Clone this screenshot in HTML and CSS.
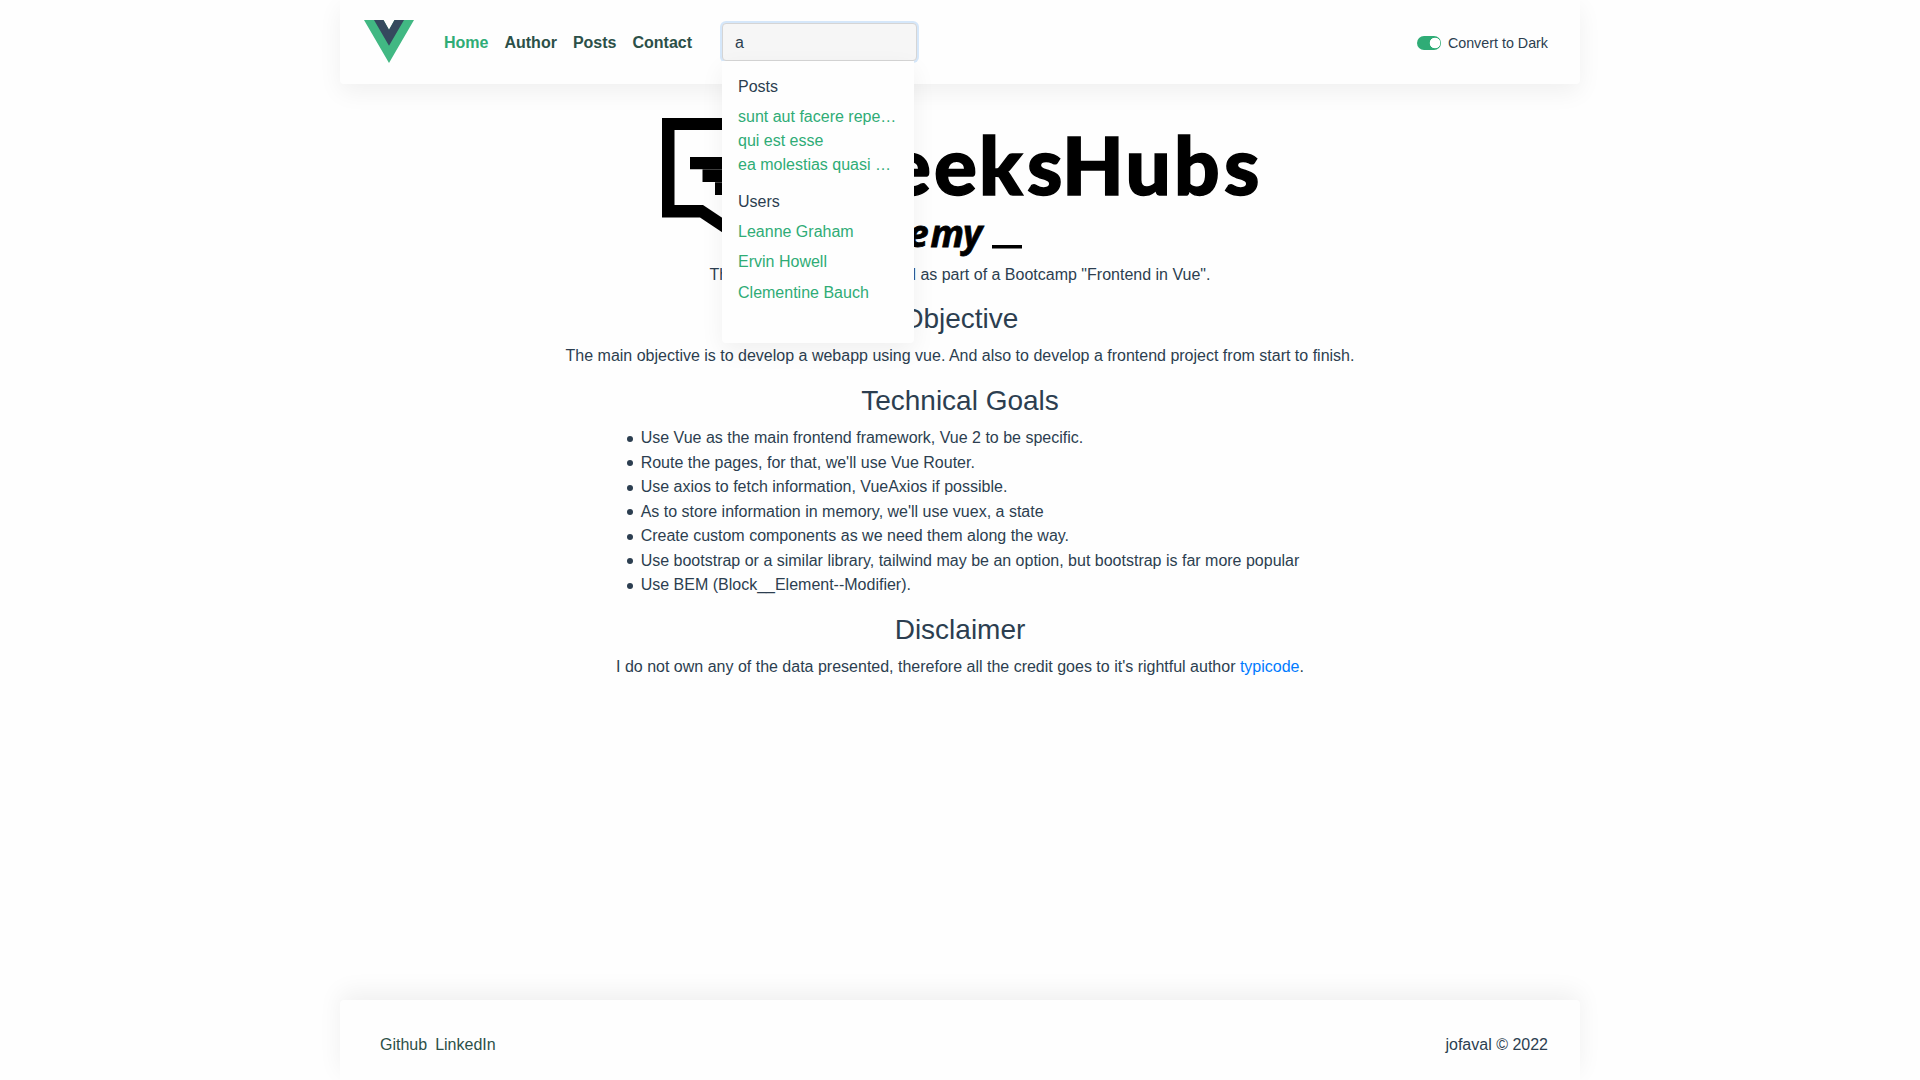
FILE: index.html
```html
<!DOCTYPE html>
<html lang="en">
<head>
<meta charset="utf-8">
<title>Home</title>
<link rel="stylesheet" href="styles.css">
</head>
<body>
<div class="app">
  <header class="header">
    <svg class="header__logo" viewBox="0 0 50 43"><path fill="#41b883" d="M0 0h19.500L25 9.700 30.500 0H50L25 43z"/><path fill="#35495e" d="M10 0h9.500L25 9.700 30.500 0H40L25 25.800z"/></svg>
    <nav class="nav">
      <a class="nav__link nav__link--active">Home</a>
      <a class="nav__link">Author</a>
      <a class="nav__link">Posts</a>
      <a class="nav__link">Contact</a>
    </nav>
    <div class="search">
      <input class="search__input" type="text" value="a">
      <div class="search__results">
        <p class="search__title">Posts</p>
        <ul class="search__posts">
          <li>sunt aut facere repellat provident</li>
          <li>qui est esse</li>
          <li>ea molestias quasi exercitationem</li>
        </ul>
        <p class="search__title">Users</p>
        <ul class="search__users">
          <li>Leanne Graham</li>
          <li>Ervin Howell</li>
          <li>Clementine Bauch</li>
        </ul>
      </div>
    </div>
    <label class="theme"><span class="theme__switch"></span>Convert to Dark</label>
  </header>
  <main class="main">
    <svg class="brand" viewBox="660 116 600 142">
      <path d="M662 118H802V217.500H742V245.500L700 217.500H662ZM674.500 130V205H703L730 223V205H790V130Z" fill-rule="evenodd"/>
      <path d="M690 157H770V169.300H690ZM702.500 169.500H770V182H702.500ZM715 182.200H760V195H715Z"/>
      <text class="brand__name" y="195" x="820 888 934 979 1027 1062 1125.500 1174 1224">GeeksHubs</text>
      <text class="brand__sub" y="246.500" x="806 832 850 874 908 930.500 963">Academy</text>
      <path d="M992 245H1022V248.500H992Z"/>
    </svg>
    <p class="intro">This web app was developed as part of a Bootcamp "Frontend in Vue".</p>
    <h3>Objective</h3>
    <p>The main objective is to develop a webapp using vue. And also to develop a frontend project from start to finish.</p>
    <h3>Technical Goals</h3>
    <ul class="goals">
      <li>Use Vue as the main frontend framework, Vue 2 to be specific.</li>
      <li>Route the pages, for that, we'll use Vue Router.</li>
      <li>Use axios to fetch information, VueAxios if possible.</li>
      <li>As to store information in memory, we'll use vuex, a state</li>
      <li>Create custom components as we need them along the way.</li>
      <li>Use bootstrap or a similar library, tailwind may be an option, but bootstrap is far more popular</li>
      <li>Use BEM (Block__Element--Modifier).</li>
    </ul>
    <h3>Disclaimer</h3>
    <p>I do not own any of the data presented, therefore all the credit goes to it's rightful author <a class="link">typicode</a>.</p>
  </main>
  <footer class="footer">
    <div class="footer__links"><a>Github</a><a>LinkedIn</a></div>
    <span>jofaval © 2022</span>
  </footer>
</div>
</body>
</html>
```
FILE: styles.css
```css
* { box-sizing: border-box; }
body {
  margin: 0;
  background: #fefefe;
  color: #2c3e50;
  font: 16px/24.5px "Liberation Sans", Arial, sans-serif;
  -webkit-font-smoothing: antialiased;
  overflow: hidden;
}
p, h3, ul { margin: 0; padding: 0; }
.app {
  width: 1240px;
  height: 1080px;
  margin: 0 auto;
  display: flex;
  flex-direction: column;
}
.header {
  position: relative;
  z-index: 1;
  height: 84px;
  flex: none;
  padding: 0 32px 0 24px;
  display: flex;
  align-items: center;
  background: #fefefe;
  border-radius: 0 0 4px 4px;
  box-shadow: 0 8px 24px rgba(0, 0, 0, .06);
}
.header__logo { width: 50px; height: 43px; margin-bottom: 1px; }
.nav { display: flex; gap: 16px; margin-left: 30px; padding-top: 2px; }
.nav__link { font-weight: 700; color: #2c5048; }
.nav__link--active { color: #2fac76; }
.search { position: relative; margin-left: 30px; }
.search__input {
  display: block;
  width: 195px;
  height: 38px;
  padding: 7px 12px 5px;
  border: 1px solid #d5d5d5;
  border-radius: 4px;
  background: #f6f6f6;
  color: #2c3e50;
  font: inherit;
  outline: none;
  box-shadow: 0 0 0 2px #d5e7fa;
}
.search__results {
  position: absolute;
  top: 38px;
  left: 0;
  width: 192px;
  height: 282px;
  padding: 14px 16px;
  background: #fefefe;
  border-radius: 0 0 4px 4px;
  box-shadow: 0 8px 24px rgba(0, 0, 0, .06);
}
.search__results ul { list-style: none; color: #2fac76; }
.search__results p { margin: 0; }
.search__results li { overflow: hidden; text-overflow: ellipsis; white-space: nowrap; }
.search__results .search__posts { margin: 5px 0 13px; line-height: 24px; }
.search__results .search__users { margin-top: 3px; line-height: 30.400px; }
.theme { margin-left: auto; padding-top: 2px; display: flex; align-items: center; gap: 7px; font-size: 14.300px; }
.theme__switch {
  width: 24px;
  height: 14px;
  border-radius: 7px;
  background: radial-gradient(circle at 18px 7px, #fff 5px, #2fac76 5.600px);
}
.main {
  flex: 1;
  display: flex;
  flex-direction: column;
  align-items: center;
  padding-top: 32px;
}
.brand { width: 600px; height: 142px; margin-bottom: 5px; flex: none; }
.brand__name { font: 900 80px Lato, sans-serif; stroke: #000; stroke-width: 1.500px; }
.brand__sub { font: italic 700 37px "Open Sans", sans-serif; stroke: #000; stroke-width: .8px; }
.main p { margin-bottom: 15px; }
.main .intro { margin-bottom: 14px; }
.main h3 { font-size: 28px; line-height: 33.600px; font-weight: 400; margin-bottom: 9px; }
.goals { padding-left: 6px; margin-bottom: 15px; list-style: none; }
.goals li { display: flex; align-items: center; gap: 8px; }
.goals li::before {
  content: "";
  width: 6px;
  height: 6px;
  margin-top: 1px;
  border-radius: 50%;
  background: currentColor;
}
.link { color: #007bff; }
.footer {
  flex: none;
  height: 80px;
  padding: 10px 32px 0 40px;
  display: flex;
  align-items: center;
  justify-content: space-between;
  background: #fefefe;
  border-radius: 4px 4px 0 0;
  box-shadow: 0 -8px 24px rgba(0, 0, 0, .06);
}
.footer__links { display: flex; gap: 8px; color: #2c5048; }
```
